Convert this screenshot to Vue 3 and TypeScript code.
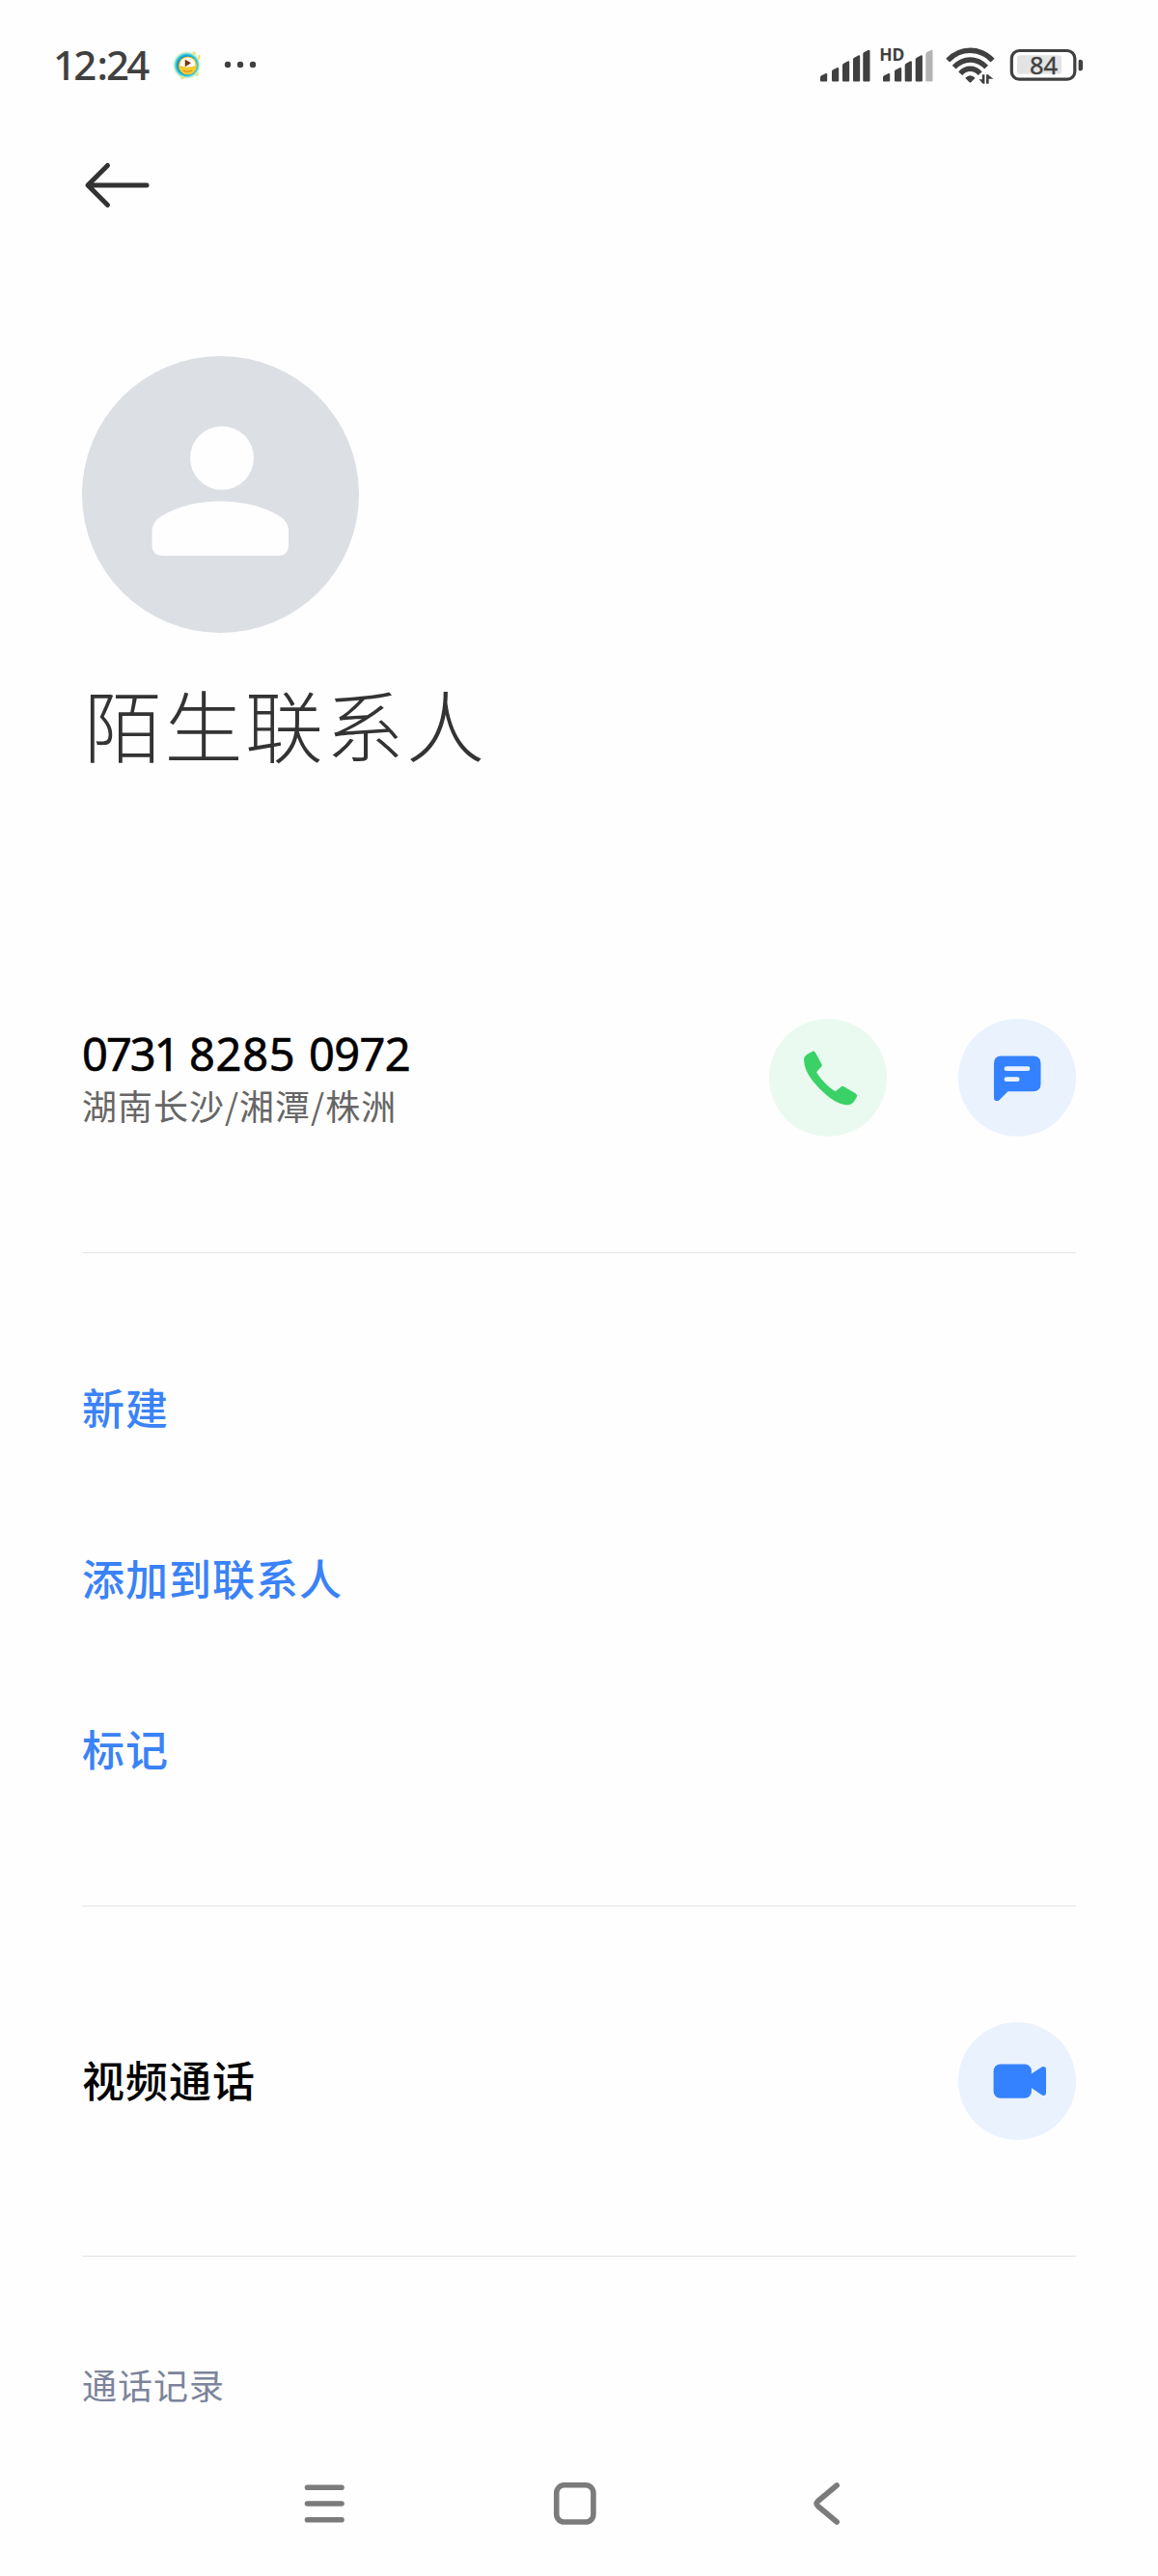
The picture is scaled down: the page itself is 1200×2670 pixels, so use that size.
<script setup lang="ts">
interface Bar {
  x: number
  top: number
}

const firstSim: Bar[] = [
  { x: 20, top: 46 },
  { x: 32, top: 40 },
  { x: 43, top: 33.3 },
  { x: 54, top: 27.3 },
  { x: 64.3, top: 21.7 },
]
const secondSim: Bar[] = [
  { x: 85, top: 46 },
  { x: 97, top: 40 },
  { x: 107.7, top: 33.3 },
  { x: 118.7, top: 27.3 },
  { x: 129.3, top: 21.7 },
]

const barPath = (bar: Bar): string =>
  `M${bar.x} 53.6V${bar.top + 4.2}q0 -1 .9 -1.6l4.4 -2.4q1.9 -.8 1.9 1V53.6q0 1 -1 1h-5.2q-1 0 -1 -1z`

const actions: string[] = ['新建', '添加到联系人', '标记']
</script>

<template>
  <div class="screen">
    <header class="status">
      <span class="clock">12<span class="colon">:</span>24</span>
      <svg class="notices" width="100" height="50" viewBox="0 0 100 50">
        <defs>
          <radialGradient id="glow">
            <stop offset="0.6" stop-color="#1488bd" />
            <stop offset="0.76" stop-color="#35cfe2" />
            <stop offset="0.88" stop-color="#d9f3cf" />
            <stop offset="1" stop-color="#fefefe" />
          </radialGradient>
        </defs>
        <circle cx="23.500" cy="27.500" r="15" fill="url(#glow)" />
        <circle cx="31" cy="15.500" r="2" fill="#e6e58b" />
        <circle cx="19" cy="40.500" r="2" fill="#dfe68f" />
        <circle cx="34" cy="37" r="2" fill="#dfe68f" />
        <path d="M35 22q2-2 1.500-5" stroke="#f2dc57" stroke-width="1.800" fill="none" />
        <circle cx="24.500" cy="28" r="9.600" fill="#f4ca31" />
        <path d="M16.500 28q0-8 8-8.500 8 .500 8 8.500-8 3-16 0z" fill="#fffaf0" />
        <path d="M22.500 23l4 2.200-4 2.600z" fill="#71351f" stroke="#71351f" stroke-width="1.500" />
        <path d="M20 33q4.500 2.500 9 0" fill="none" stroke="#cb8d20" stroke-width="1.200" />
        <g fill="#404040">
          <circle cx="66" cy="27" r="3.200" />
          <circle cx="79" cy="27" r="3.200" />
          <circle cx="92" cy="27" r="3.200" />
        </g>
      </svg>
      <svg class="indicators" width="310" height="80" viewBox="0 0 310 80" fill="#404040">
        <path v-for="bar in firstSim" :key="bar.x" :d="barPath(bar)" />
        <path
          v-for="(bar, i) in secondSim"
          :key="bar.x"
          :d="barPath(bar)"
          :fill="i === 4 ? '#b3b3b3' : '#404040'"
        />
        <text x="81.300" y="33.200" class="hd">HD</text>
        <g fill="none" stroke="#404040" stroke-width="5.400">
          <path d="M152.200 32.600Q162 22.300 175.400 22.300T198.600 32.600" />
          <path d="M158.700 39.700Q166 32 175.400 32T192.100 39.700" />
          <path d="M165.200 46.200Q169.500 41.300 175.400 41.300T185.600 46.200" />
        </g>
        <path d="M170.200 50.800Q175.400 45.800 180.600 50.800L176.500 54.900Q175.400 55.900 174.300 54.900z" />
        <path d="M190.400 47.300V56.700H188.600L184.500 52.300H187.800V47.300zM192 56.700V47.300H193.800L199.400 51.800H194.600V56.700z" />
        <rect x="218.300" y="22.500" width="65.500" height="29.700" rx="8" fill="none" stroke="#404040" stroke-width="3.200" />
        <path d="M287.600 33.500q0-1.700 1.500-1.700 3 0 3 3V40.500q0 3-3 3-1.500 0-1.500-1.700z" />
        <rect x="224" y="27.300" width="46" height="19.400" rx="3" fill="#e3e3e3" />
        <text x="251.500" y="46.600" class="charge">84</text>
      </svg>
    </header>

    <nav class="toolbar">
      <svg width="72" height="54" viewBox="0 0 72 54" fill="none" stroke="#333" stroke-width="5" stroke-linecap="round" stroke-linejoin="round">
        <path d="M26.500 6.500L6 27L26.500 47.500M6.500 27H67" />
      </svg>
    </nav>

    <section class="profile">
      <svg class="avatar" width="287" height="287" viewBox="0 0 287 287">
        <circle cx="143.500" cy="143.500" r="143.500" fill="#dcdfe4" />
        <circle cx="145" cy="105.700" r="33" fill="#fefefe" />
        <path d="M72.500 181.500Q73 171 83 165.500Q109 150.500 143.500 150.500T204 165.500Q214 171.500 214 181.500V195.500Q214 207 203 207H84Q72.500 207 72.500 195.500z" fill="#fefefe" />
      </svg>
      <h1>陌生联系人</h1>
    </section>

    <section class="number">
      <div>
        <div class="digits"><span class="g1">0731</span><span class="g2">8285</span><span class="g3">0972</span></div>
        <div class="place">湖南长沙/湘潭/株洲</div>
      </div>
      <div class="buttons">
        <button class="round call" aria-label="拨打">
          <svg width="122" height="122" viewBox="0 0 122 122" fill="#3ad166">
            <path d="M36.200 44Q35.200 39 40 36.500L44.500 33.900Q46.700 33 48 35L54.700 47.500Q55 48.700 54.200 49.500L49 55.200Q56.500 67.500 68.500 75.200L75 70.200Q76 69.500 77 70.100L89.500 77.300Q91.800 78.700 90.900 81L88.200 85.200Q85.500 89.500 80.500 89.200Q68 88.500 52.500 72.500Q37 57 36.200 44z" />
          </svg>
        </button>
        <button class="round blue" aria-label="短信">
          <svg width="122" height="122" viewBox="0 0 122 122">
            <path d="M44.500 38.500H77.500Q85.500 38.500 85.500 46.500V67.500Q85.500 75.300 77.500 75.300H51.500L42.500 84.200Q40.500 85.700 38.200 84.700Q37 84 37 82V46.500Q37 38.500 44.500 38.500z" fill="#3482ff" />
            <path d="M50 51.700H72M50 62.700H61.200" stroke="#eaf2fe" stroke-width="4.800" stroke-linecap="round" />
          </svg>
        </button>
      </div>
    </section>

    <section class="actions">
      <a v-for="action in actions" :key="action">{{ action }}</a>
    </section>

    <section class="video">
      <span>视频通话</span>
      <button class="round blue" aria-label="视频">
        <svg width="122" height="122" viewBox="0 0 122 122" fill="#3482ff">
          <rect x="36.600" y="43.500" width="39.300" height="35.300" rx="7" />
          <path d="M75 54L86 46.700Q88 45.300 90 46.500Q91 47.300 91 49V73.200Q91 75 89.500 75.700Q88 76.400 86.300 75.300L75 67.500z" />
        </svg>
      </button>
    </section>

    <section class="history">通话记录</section>

    <footer class="keys">
      <svg width="1200" height="80" viewBox="0 0 1200 80" fill="none" stroke="#7b7b7b" stroke-width="5.600" stroke-linecap="round" stroke-linejoin="round">
        <path d="M318.500 23.300H354M318.500 40H354M318.500 56.700H354" />
        <rect x="576.700" y="20.800" width="38.200" height="38.200" rx="8" />
        <path d="M867.200 21L847.500 37.500Q844.700 40 847.500 42.500L867.200 59" />
      </svg>
    </footer>
  </div>
</template>

<style>
body {
  background: #fefefe;
}
</style>

<style scoped>
.screen {
  display: flex;
  flex-direction: column;
  width: 1200px;
  height: 2670px;
  overflow: hidden;
  box-sizing: border-box;
  background: #fefefe;
  font-family: 'Noto Sans CJK SC', sans-serif;
}
.status {
  display: flex;
  height: 110px;
  flex: none;
  padding-left: 55px;
}
.clock {
  width: 115px;
  padding-top: 40px;
  box-sizing: border-box;
  font: 500 42px/54px 'Noto Sans', sans-serif;
  letter-spacing: -2.800px;
  color: #404040;
  white-space: nowrap;
}
.colon {
  margin: 0 1px 0 3px;
}
.notices {
  margin-top: 40px;
}
.indicators {
  margin: 30px 0 0 560px;
}
.hd {
  font: 700 17.5px 'Noto Sans', sans-serif;
  letter-spacing: -0.2px;
}
.charge {
  font: 400 25.5px 'Noto Sans', sans-serif;
  stroke: #404040;
  stroke-width: 0.4px;
  text-anchor: middle;
}
.toolbar {
  flex: none;
  height: 259px;
  padding: 55px 0 0 85px;
  box-sizing: border-box;
}
.profile {
  flex: none;
  height: 687px;
  padding-left: 85px;
}
.avatar {
  display: block;
}
h1 {
  margin: 31px 0 0 2px;
  font-size: 81px;
  font-weight: 300;
  line-height: 124px;
  letter-spacing: 2.500px;
  color: #333;
}
.number {
  display: flex;
  flex: none;
  justify-content: space-between;
  height: 243px;
  margin: 0 85px;
  box-sizing: border-box;
  border-bottom: 1px solid #e5e5e5;
}
.digits {
  display: flex;
  height: 60px;
  margin-top: 6px;
  font: 400 47px/60px 'Noto Sans', sans-serif;
  -webkit-text-stroke: 0.6px #000;
  color: #000;
}
.g1 {
  width: 111px;
  letter-spacing: -2px;
}
.g2 {
  width: 124px;
  letter-spacing: 0.700px;
}
.g3 {
  letter-spacing: -0.600px;
}
.place {
  margin-top: 1px;
  font-size: 36px;
  font-weight: 400;
  line-height: 44px;
  letter-spacing: 1px;
  color: #666;
}
.buttons {
  display: flex;
  gap: 74px;
}
.round {
  display: block;
  width: 122px;
  height: 122px;
  padding: 0;
  border: 0;
  border-radius: 50%;
}
.call {
  background: #eafaf0;
}
.blue {
  background: #eaf2fe;
}
.actions {
  display: flex;
  flex-direction: column;
  flex: none;
  height: 677px;
  margin: 0 85px;
  padding-top: 71px;
  box-sizing: border-box;
  border-bottom: 1px solid #e5e5e5;
}
.actions a {
  font-size: 44px;
  font-weight: 500;
  line-height: 177px;
  letter-spacing: 1px;
  color: #3a82f7;
}
.video {
  display: flex;
  flex: none;
  align-items: center;
  justify-content: space-between;
  height: 363px;
  margin: 0 85px;
  box-sizing: border-box;
  border-bottom: 1px solid #e5e5e5;
  font-size: 44px;
  font-weight: 500;
  letter-spacing: 1px;
  color: #000;
}
.video span {
  padding-bottom: 4px;
}
.history {
  flex: none;
  height: 216px;
  padding: 108px 0 0 85px;
  box-sizing: border-box;
  font-size: 36px;
  line-height: 48px;
  letter-spacing: 1px;
  color: #7d849b;
}
.keys svg {
  display: block;
}
</style>
